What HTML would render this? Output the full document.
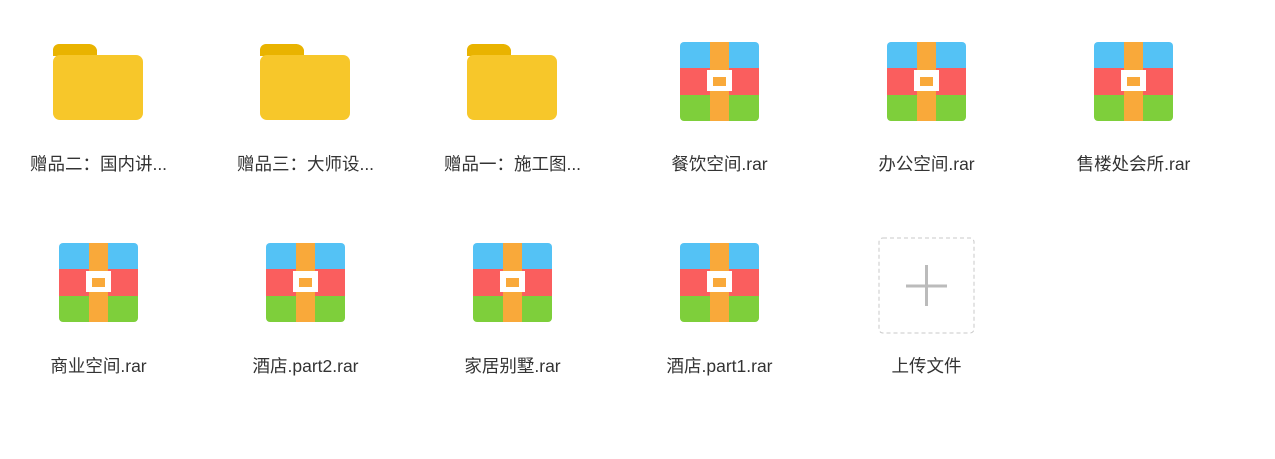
<!DOCTYPE html>
<html><head><meta charset="utf-8"><style>
body{margin:0;width:1275px;height:459px;background:#fff;position:relative;overflow:hidden;font-family:"Liberation Sans","Noto Sans CJK SC",sans-serif;}
.lbl{position:absolute;left:0;width:207px;text-align:center;font-size:17.5px;color:#333;white-space:nowrap;}
svg{position:absolute;}
</style></head><body>
<svg width="0" height="0"><defs>
<g id="f"><path d="M0 6a6 6 0 0 1 6-6h30a8 8 0 0 1 8 6v6H0z" fill="#E9B300"/><rect x="0" y="11" width="90" height="65" rx="7" fill="#F7C72A"/></g>
<g id="r"><clipPath id="c"><rect width="79" height="79" rx="4"/></clipPath><g clip-path="url(#c)"><rect width="79" height="26" fill="#54C2F5"/><rect y="26" width="79" height="27" fill="#FA5E5E"/><rect y="53" width="79" height="26" fill="#7ECF3B"/><rect x="30" width="19" height="79" fill="#F9A93A"/><rect x="27" y="28" width="25" height="21" fill="#fff"/><rect x="33" y="35" width="13" height="9" fill="#F9A93A"/></g></g>
</defs></svg>
<svg style="left:53px;top:44px" width="90" height="76"><use href="#f"/></svg>
<svg style="left:260px;top:44px" width="90" height="76"><use href="#f"/></svg>
<svg style="left:467px;top:44px" width="90" height="76"><use href="#f"/></svg>
<svg style="left:680px;top:42px" width="79" height="79"><use href="#r"/></svg>
<svg style="left:887px;top:42px" width="79" height="79"><use href="#r"/></svg>
<svg style="left:1094px;top:42px" width="79" height="79"><use href="#r"/></svg>
<svg style="left:59px;top:243px" width="79" height="79"><use href="#r"/></svg>
<svg style="left:266px;top:243px" width="79" height="79"><use href="#r"/></svg>
<svg style="left:473px;top:243px" width="79" height="79"><use href="#r"/></svg>
<svg style="left:680px;top:243px" width="79" height="79"><use href="#r"/></svg>
<svg style="left:878px;top:237px" width="97" height="97"><rect x="1" y="1" width="95" height="95" rx="4" fill="none" stroke="#c8c8c8" stroke-dasharray="4 3"/><path d="M28 49h41M48.5 28v41" stroke="#bbb" stroke-width="3"/></svg>
<div class="lbl" style="left:-5px;top:151px">赠品二：国内讲...</div>
<div class="lbl" style="left:202px;top:151px">赠品三：大师设...</div>
<div class="lbl" style="left:409px;top:151px">赠品一：施工图...</div>
<div class="lbl" style="left:616px;top:151px">餐饮空间.rar</div>
<div class="lbl" style="left:823px;top:151px">办公空间.rar</div>
<div class="lbl" style="left:1030px;top:151px">售楼处会所.rar</div>
<div class="lbl" style="left:-5px;top:353px">商业空间.rar</div>
<div class="lbl" style="left:202px;top:353px">酒店.part2.rar</div>
<div class="lbl" style="left:409px;top:353px">家居别墅.rar</div>
<div class="lbl" style="left:616px;top:353px">酒店.part1.rar</div>
<div class="lbl" style="left:823px;top:353px">上传文件</div>
</body></html>
